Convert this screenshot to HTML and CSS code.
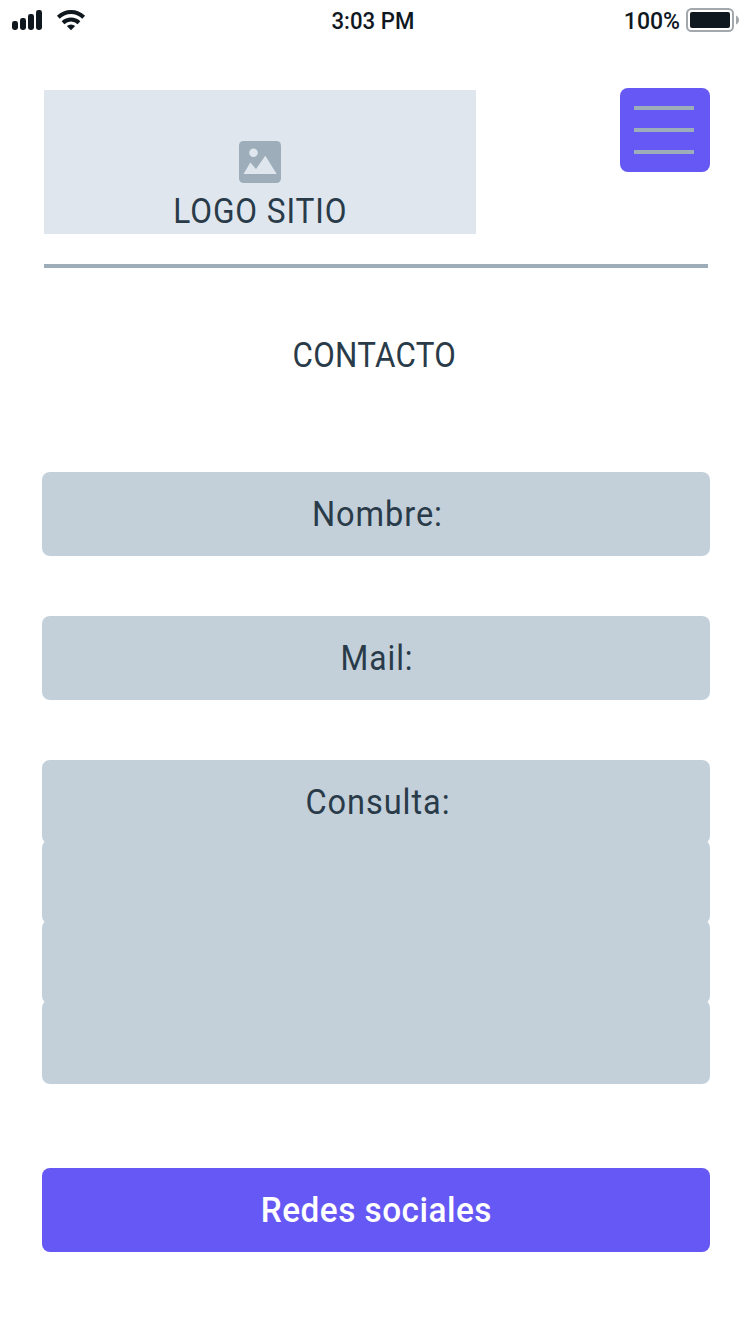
FILE: index.html
```html
<!DOCTYPE html>
<html lang="es">
<head>
<meta charset="utf-8">
<title>Contacto</title>
<link rel="stylesheet" href="styles.css">
</head>
<body>
<div class="screen">
  <div class="status">
    <svg class="signals" width="76" height="24" viewBox="0 0 76 24" fill="#10181f">
      <rect x="0" y="13" width="6" height="9" rx="2.4"/>
      <rect x="8" y="10" width="6" height="12" rx="2.4"/>
      <rect x="16" y="6" width="6" height="16" rx="2.4"/>
      <rect x="24" y="2" width="6" height="20" rx="2.4"/>
      <g fill="none" stroke="#10181f" stroke-width="4">
        <path d="M46.300 9.200C53.600 2.200 64.400 2.200 71.700 9.200"/>
        <path d="M51 14.800C55.600 10.500 62.400 10.500 67 14.800"/>
      </g>
      <path d="M54.800 18Q59 15 63.200 18L59 22.200Z"/>
    </svg>
    <span class="clock">3:03 PM</span>
    <div class="power">
      <span class="percent">100%</span>
      <svg width="54" height="24" viewBox="0 0 54 24">
        <rect x="1" y="1" width="46" height="22" rx="4.500" fill="#fff" stroke="#a3a8ad" stroke-width="2"/>
        <rect x="4" y="4" width="40" height="16" rx="2" fill="#10181f"/>
        <path d="M50 7.500Q53 9 53 12T50 16.500Z" fill="#a3a8ad"/>
      </svg>
    </div>
  </div>

  <header class="header">
    <div class="logo">
      <svg width="42" height="42" viewBox="0 0 42 42">
        <rect width="42" height="42" rx="4.500" fill="#9eadba"/>
        <circle cx="14.500" cy="11.700" r="4.300" fill="#dfe6ee"/>
        <path d="M4.500 33L11.300 21.500L17 28L26.300 14.800L37.700 33Z" fill="#dfe6ee"/>
      </svg>
      <span class="label label-logo">LOGO SITIO</span>
    </div>
    <button class="menu" aria-label="Menú"><i></i><i></i><i></i></button>
  </header>

  <h1 class="title"><span class="label label-title">CONTACTO</span></h1>

  <main class="form">
    <div class="field"><span class="label label-name">Nombre:</span></div>
    <div class="field"><span class="label label-mail">Mail:</span></div>
    <div class="area">
      <div class="field"><span class="label label-query">Consulta:</span></div>
      <div class="field"></div>
      <div class="field"></div>
      <div class="field"></div>
    </div>
    <button class="social"><span class="label label-social">Redes sociales</span></button>
  </main>
</div>
</body>
</html>
```
FILE: styles.css
```css
* { box-sizing: border-box; }
body { margin: 0; background: #fff; font-family: Roboto, "Liberation Sans", sans-serif; color: #293b49; }
button { border: 0; font: inherit; }
svg { display: block; }
.screen { width: 752px; height: 1336px; overflow: hidden; }
.status { display: grid; grid-template-columns: 1fr auto 1fr; height: 40px; padding: 8px 12px 0; color: #10181f; font-size: 23px; line-height: 27px; font-weight: 500; }
.clock { margin-right: 6px; transform: scaleX(.965); }
.power { display: flex; justify-content: flex-end; gap: 6px; }
.header { display: flex; justify-content: space-between; align-items: flex-start; width: 664px; height: 180px; margin: 48px 0 0 44px; border-bottom: 4px solid #9eadba; }
.logo { display: flex; flex-direction: column; align-items: center; width: 432px; height: 144px; margin-top: 2px; padding-top: 51px; background: #dfe6ee; }
.menu { display: flex; flex-direction: column; gap: 18px; width: 90px; height: 84px; margin-right: -2px; padding: 18px 16px 0 14px; border-radius: 8px; background: #6558f5; }
.menu i { height: 4px; background: #9eadba; }
.label { display: block; font-size: 35px; line-height: 42px; white-space: nowrap; }
.label-logo { margin-top: 8px; letter-spacing: 1px; transform: scaleX(.903); }
.title { display: flex; justify-content: center; margin: 67px 4px 0 0; font-weight: 400; }
.label-title { letter-spacing: .3px; transform: scaleX(.895); }
.form { width: 668px; margin: 95px 0 0 42px; }
.field, .social { display: flex; justify-content: center; width: 100%; height: 84px; padding: 22px 0 0; border-radius: 8px; background: #c3cfd9; }
.form > .field { margin-bottom: 60px; }
.area .field + .field { margin-top: -4px; }
.label-name, .label-mail, .label-query { letter-spacing: 1px; margin-left: 3px; transform: scaleX(.93); }
.label-mail { transform: scaleX(.91); }
.social { margin-top: 84px; background: #6558f5; color: #fff; font-weight: 500; }
.label-social { letter-spacing: .5px; transform: scaleX(.953); }
```
